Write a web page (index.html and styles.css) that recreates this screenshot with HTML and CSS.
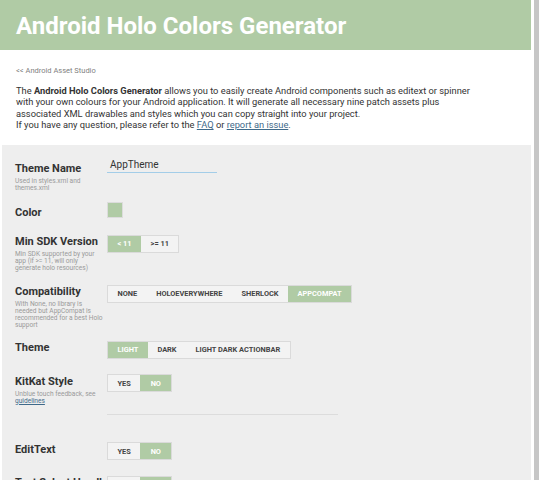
FILE: index.html
```html
<!DOCTYPE html>
<html>
<head>
<meta charset="utf-8">
<link rel="stylesheet" href="styles.css">
</head>
<body>
<div class="frame">
  <div class="page">
    <header class="header"><h1 class="title">Android Holo Colors Generator</h1></header>
    <section class="intro">
      <a class="back" href="#">&lt;&lt; Android Asset Studio</a>
      <p class="desc">The <b>Android Holo Colors Generator</b> allows you to easily create Android components such as editext or spinner with your own colours for your Android application. It will generate all necessary nine patch assets plus associated XML drawables and styles which you can copy straight into your project.<br>If you have any question, please refer to the <a href="#">FAQ</a> or <a href="#">report an issue</a>.</p>
    </section>
    <section class="form">
      <div class="row row-name">
        <div class="label"><div class="name">Theme Name</div><div class="sub">Used in styles.xml and<br>themes.xml</div></div>
        <div class="control"><div class="input">AppTheme</div></div>
      </div>
      <div class="row">
        <div class="label"><div class="name">Color</div></div>
        <div class="control"><div class="swatch"></div></div>
      </div>
      <div class="row">
        <div class="label"><div class="name">Min SDK Version</div><div class="sub">Min SDK supported by your<br>app (if &gt;= 11, will only<br>generate holo resources)</div></div>
        <div class="control"><div class="group"><span class="btn on">&lt; 11</span><span class="btn">&gt;= 11</span></div></div>
      </div>
      <div class="row row-compat">
        <div class="label"><div class="name">Compatibility</div><div class="sub">With None, no library is<br>needed but AppCompat is<br>recommended for a best Holo<br>support</div></div>
        <div class="control"><div class="group"><span class="btn">NONE</span><span class="btn">HOLOEVERYWHERE</span><span class="btn">SHERLOCK</span><span class="btn on">APPCOMPAT</span></div></div>
      </div>
      <div class="row row-theme">
        <div class="label"><div class="name">Theme</div></div>
        <div class="control"><div class="group"><span class="btn on">LIGHT</span><span class="btn">DARK</span><span class="btn">LIGHT DARK ACTIONBAR</span></div></div>
      </div>
      <div class="row">
        <div class="label"><div class="name">KitKat Style</div><div class="sub">Unblue touch feedback, see<br><a href="#">guidelines</a></div></div>
        <div class="control"><div class="group"><span class="btn">YES</span><span class="btn on">NO</span></div></div>
      </div>
      <div class="row row-rule">
        <div class="label"></div>
        <div class="control"><hr class="rule"></div>
      </div>
      <div class="row row-edit">
        <div class="label"><div class="name">EditText</div></div>
        <div class="control"><div class="group"><span class="btn">YES</span><span class="btn on">NO</span></div></div>
      </div>
      <div class="row">
        <div class="label"><div class="name">Text Select Handle</div></div>
        <div class="control"><div class="group"><span class="btn">YES</span><span class="btn on">NO</span></div></div>
      </div>
    </section>
  </div>
  <div class="edge"></div>
</div>
</body>
</html>
```
FILE: styles.css
```css
html, body {
  margin: 0;
  padding: 0;
  height: 480px;
  overflow: hidden;
  background: #ffffff;
}
body {
  font-family: Roboto, "Liberation Sans", sans-serif;
  color: #333333;
}
.frame {
  display: flex;
  height: 480px;
}
.page {
  width: 531px;
  flex: none;
}
.edge {
  width: 5px;
  margin-left: 3px;
  background: #c6c6c6;
  flex: none;
}
.header {
  background: #b0cba5;
  height: 50px;
  display: flex;
  align-items: center;
  padding-left: 16px;
}
.title {
  margin: 0;
  color: #ffffff;
  font-size: 24px;
  font-weight: 700;
  line-height: 1;
  padding-top: 1px;
}
.intro {
  padding: 16px 16px 0 16px;
  height: 79px;
}
.back {
  display: block;
  font-size: 7.5px;
  color: #7f7f7f;
  text-decoration: none;
  line-height: 10px;
}
.desc {
  width: 462px;
  margin: 9px 0 0 0;
  font-size: 9.3px;
  line-height: 11.3px;
  color: #333333;
}
.desc a {
  color: #3f6a8a;
}
.desc b {
  font-weight: 700;
}
.form {
  background: #eeeeee;
  margin-left: 2px;
  padding: 13px 0 0 13px;
  height: 400px;
  display: flex;
  flex-direction: column;
  gap: 9px;
}
.row {
  display: grid;
  grid-template-columns: 92px 1fr;
  align-items: start;
}
.name {
  font-size: 11px;
  font-weight: 700;
  line-height: 18px;
  padding-top: 2px;
  color: #333333;
  white-space: nowrap;
}
.sub {
  font-size: 6.6px;
  line-height: 7px;
  color: #9a9a9a;
  white-space: nowrap;
}
.sub a {
  color: #3f6a8a;
}
.input {
  width: 107px;
  height: 13px;
  padding-left: 3px;
  font-size: 10px;
  line-height: 12px;
  border-bottom: 1px solid #a3cde8;
  margin-top: 1px;
}
.swatch {
  width: 14px;
  height: 14px;
  background: #b0cba5;
  border: 1px solid #dcdcdc;
}
.group {
  display: inline-flex;
  border: 1px solid #dadada;
  background: #f3f3f3;
  height: 16px;
}
.btn {
  display: flex;
  align-items: center;
  justify-content: center;
  padding: 0 9.5px;
  min-width: 12px;
  font-size: 7.4px;
  font-weight: 700;
  color: #444444;
}
.btn.on {
  background: #b0cba5;
  color: #ffffff;
}
.row-name {
  margin-bottom: 1px;
}
.row-compat {
  margin-bottom: -1px;
}
.row-theme {
  margin-bottom: 3px;
}
.rule {
  width: 231px;
  margin: 0;
  border: 0;
  border-top: 1px solid #dcdcdc;
  height: 0;
}
.row-rule {
  margin-bottom: 15px;
}
.row-edit {
  margin-bottom: 3px;
}
```
